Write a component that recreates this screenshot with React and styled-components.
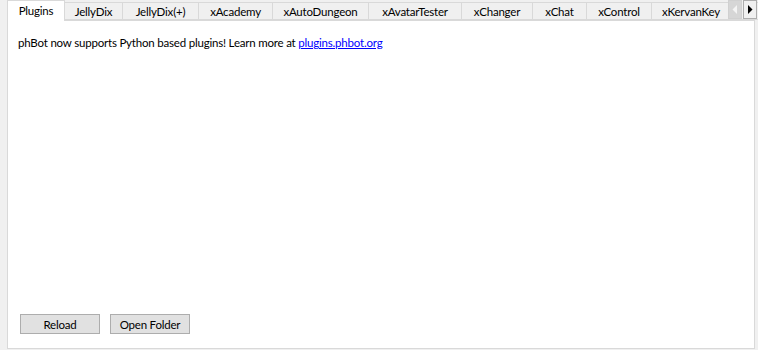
import React from "react";
import styled, { createGlobalStyle } from "styled-components";

const Global = createGlobalStyle`
  html, body { margin: 0; padding: 0; background: #f0f0f0; }
  body {
    font-family: "Lato", "Noto Sans", sans-serif;
    font-size: 11.5px;
    letter-spacing: -0.2px;
    color: #000;
  }
`;

const Window = styled.div`
  width: 758px;
  height: 350px;
  box-sizing: border-box;
  padding: 0 3px 1px 7px;
  display: flex;
  flex-direction: column;
  overflow: hidden;
`;

const TabStrip = styled.div`
  position: relative;
  height: 20px;
  display: flex;
  align-items: flex-end;
  flex: none;
  z-index: 1;
`;

const Tab = styled.div`
  flex: none;
  box-sizing: border-box;
  width: ${(p) => p.$w}px;
  height: ${(p) => (p.$active ? 21 : 18)}px;
  margin-bottom: ${(p) => (p.$active ? -1 : 0)}px;
  margin-left: -1px;
  border: 1px solid #d9d9d9;
  border-bottom: ${(p) => (p.$active ? "none" : "1px solid #d9d9d9")};
  background: ${(p) => (p.$active ? "#ffffff" : "#f0f0f0")};
  display: flex;
  align-items: center;
  justify-content: center;
  padding-bottom: ${(p) => (p.$active ? 2 : 0)}px;
  white-space: nowrap;
  &:first-child { margin-left: 0; }
`;

const Scroller = styled.div`
  position: absolute;
  top: 0;
  right: -2px;
  display: flex;
  gap: 1px;
  z-index: 2;
  background: #f0f0f0;
`;

const ScrollBtn = styled.div`
  box-sizing: border-box;
  width: 14px;
  height: 19px;
  border: 1px solid ${(p) => (p.$disabled ? "#d0d0d0" : "#adadad")};
  background: ${(p) => (p.$disabled ? "#d6d6d6" : "#f0f0f0")};
  display: flex;
  align-items: center;
  justify-content: center;
`;

const Panel = styled.div`
  flex: 1;
  box-sizing: border-box;
  background: #ffffff;
  border: 1px solid #d9d9d9;
  display: flex;
  flex-direction: column;
  padding: 14px 12px 14px 10px;
`;

const Info = styled.div`
  line-height: 16px;
`;

const Link = styled.a`
  color: #0000ff;
  text-decoration: underline;
`;

const ButtonRow = styled.div`
  margin-top: auto;
  display: flex;
  gap: 10px;
  padding-left: 2px;
`;

const Button = styled.button`
  box-sizing: border-box;
  width: 80px;
  height: 20px;
  border: 1px solid #adadad;
  background: #e1e1e1;
  font-family: inherit;
  font-size: inherit;
  letter-spacing: inherit;
  color: #000;
  padding: 0;
  display: flex;
  align-items: center;
  justify-content: center;
`;

const tabs = [
  ["Plugins", 58],
  ["JellyDix", 59],
  ["JellyDix(+)", 77],
  ["xAcademy", 75],
  ["xAutoDungeon", 97],
  ["xAvatarTester", 94],
  ["xChanger", 72],
  ["xChat", 55],
  ["xControl", 66],
  ["xKervanKey", 80],
  ["", 60],
];

const Arrow = ({ dir, color }) => (
  <svg width="6" height="9" viewBox="0 0 6 9">
    {dir === "left" ? (
      <polygon points="5,0 5,9 0.5,4.5" fill={color} />
    ) : (
      <polygon points="1,0 1,9 5.5,4.5" fill={color} />
    )}
  </svg>
);

export default function App() {
  return (
    <>
      <Global />
      <Window>
        <TabStrip>
          {tabs.map(([label, w], i) => (
            <Tab key={i} $w={w} $active={i === 0}>
              {label}
            </Tab>
          ))}
          <Scroller>
            <ScrollBtn $disabled>
              <Arrow dir="left" color="#f4f4f4" />
            </ScrollBtn>
            <ScrollBtn>
              <Arrow dir="right" color="#000" />
            </ScrollBtn>
          </Scroller>
        </TabStrip>
        <Panel>
          <Info>
            phBot now supports Python based plugins! Learn more at{" "}
            <Link href="#">plugins.phbot.org</Link>
          </Info>
          <ButtonRow>
            <Button>Reload</Button>
            <Button>Open Folder</Button>
          </ButtonRow>
        </Panel>
      </Window>
    </>
  );
}
